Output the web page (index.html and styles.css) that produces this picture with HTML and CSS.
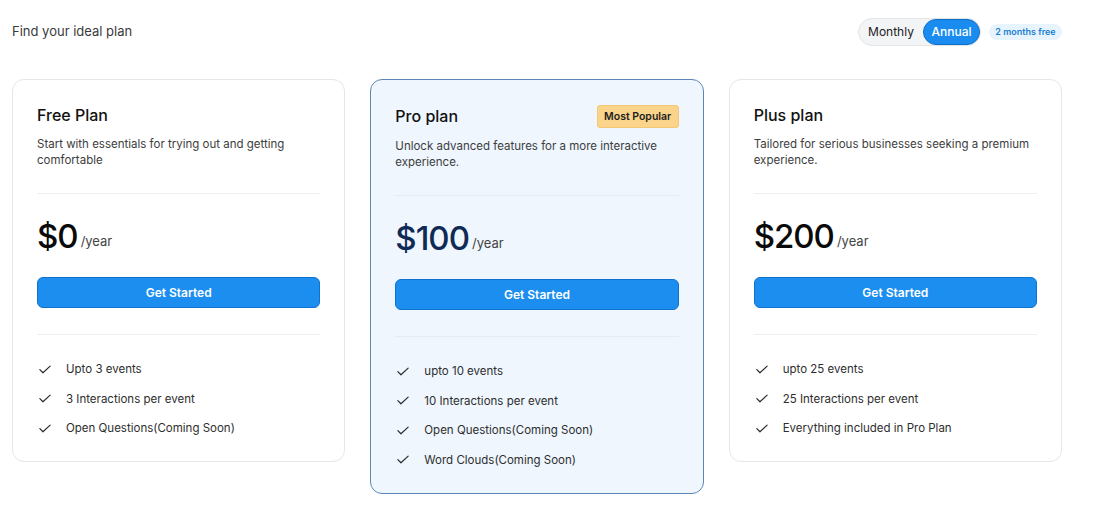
FILE: index.html
```html
<!DOCTYPE html>
<html>
<head>
<meta charset="utf-8">
<link rel="stylesheet" href="styles.css">
</head>
<body>
<div class="page">
  <header class="top">
    <div class="heading">Find your ideal plan</div>
    <div class="billing">
      <div class="toggle">
        <span class="opt">Monthly</span>
        <span class="opt active">Annual</span>
      </div>
      <span class="free-badge">2 months free</span>
    </div>
  </header>

  <div class="cards">
    <div class="card">
      <div class="card-head"><h2 class="title">Free Plan</h2></div>
      <p class="desc">Start with essentials for trying out and getting comfortable</p>
      <hr class="divider">
      <div class="price"><span class="amount">$0</span><span class="per">/year</span></div>
      <button class="cta">Get Started</button>
      <hr class="divider">
      <ul class="features">
        <li><svg class="check" viewBox="0 0 14 10"><path d="M1 5.2 L4.6 8.8 L13 1"/></svg>Upto 3 events</li>
        <li><svg class="check" viewBox="0 0 14 10"><path d="M1 5.2 L4.6 8.8 L13 1"/></svg>3 Interactions per event</li>
        <li><svg class="check" viewBox="0 0 14 10"><path d="M1 5.2 L4.6 8.8 L13 1"/></svg>Open Questions(Coming Soon)</li>
      </ul>
    </div>

    <div class="card pro">
      <div class="card-head"><h2 class="title">Pro plan</h2><span class="popular">Most Popular</span></div>
      <p class="desc">Unlock advanced features for a more interactive experience.</p>
      <hr class="divider">
      <div class="price"><span class="amount">$100</span><span class="per">/year</span></div>
      <button class="cta">Get Started</button>
      <hr class="divider">
      <ul class="features">
        <li><svg class="check" viewBox="0 0 14 10"><path d="M1 5.2 L4.6 8.8 L13 1"/></svg>upto 10 events</li>
        <li><svg class="check" viewBox="0 0 14 10"><path d="M1 5.2 L4.6 8.8 L13 1"/></svg>10 Interactions per event</li>
        <li><svg class="check" viewBox="0 0 14 10"><path d="M1 5.2 L4.6 8.8 L13 1"/></svg>Open Questions(Coming Soon)</li>
        <li><svg class="check" viewBox="0 0 14 10"><path d="M1 5.2 L4.6 8.8 L13 1"/></svg>Word Clouds(Coming Soon)</li>
      </ul>
    </div>

    <div class="card">
      <div class="card-head"><h2 class="title">Plus plan</h2></div>
      <p class="desc">Tailored for serious businesses seeking a premium experience.</p>
      <hr class="divider">
      <div class="price"><span class="amount">$200</span><span class="per">/year</span></div>
      <button class="cta">Get Started</button>
      <hr class="divider">
      <ul class="features">
        <li><svg class="check" viewBox="0 0 14 10"><path d="M1 5.2 L4.6 8.8 L13 1"/></svg>upto 25 events</li>
        <li><svg class="check" viewBox="0 0 14 10"><path d="M1 5.2 L4.6 8.8 L13 1"/></svg>25 Interactions per event</li>
        <li><svg class="check" viewBox="0 0 14 10"><path d="M1 5.2 L4.6 8.8 L13 1"/></svg>Everything included in Pro Plan</li>
      </ul>
    </div>
  </div>
</div>
</body>
</html>
```

FILE: styles.css
```css
* { box-sizing: border-box; }
html, body { margin: 0; padding: 0; background: #fff; }
body {
  font-family: Inter, "Noto Sans", "Liberation Sans", sans-serif;
  color: #222;
}
.page {
  width: 1050px;
  margin-left: 12px;
  padding-top: 18px;
}
.top {
  display: flex;
  align-items: center;
  justify-content: space-between;
  height: 28px;
}
.heading {
  font-size: 13px;
  color: #3a3a3a;
  margin-top: -2px;
}
.billing {
  display: flex;
  align-items: center;
  gap: 8px;
}
.toggle {
  display: flex;
  align-items: center;
  width: 123px;
  height: 28px;
  background: #f3f4f6;
  border: 1px solid #e3e5e8;
  border-radius: 14px;
}
.opt {
  font-size: 12px;
  color: #222;
  line-height: 26px;
}
.opt:first-child {
  width: 64px;
  text-align: center;
}
.opt.active {
  width: 57px;
  height: 26px;
  text-align: center;
  color: #fff;
  font-weight: 500;
  background: #1a8cf0;
  border: 1px solid #0d6fc9;
  border-radius: 13px;
  line-height: 24px;
}
.free-badge {
  width: 73px;
  text-align: center;
  font-size: 9px;
  font-weight: 600;
  color: #1a7fd0;
  background: #e8f4fd;
  border-radius: 8px;
  height: 16px;
  line-height: 16px;
}
.cards {
  display: grid;
  grid-template-columns: repeat(3, 1fr);
  gap: 25px;
  align-items: start;
  margin-top: 33px;
}
.card {
  border: 1px solid #e4e6e9;
  border-radius: 12px;
  padding: 25px 24px 24px;
  background: #fff;
}
.card.pro {
  background: #eff6fe;
  border-color: #5b86b6;
}
.card-head {
  display: flex;
  align-items: center;
  justify-content: space-between;
  min-height: 21px;
}
.title {
  margin: 0;
  font-size: 16px;
  font-weight: 500;
  line-height: 21px;
  color: #111;
}
.popular {
  width: 82px;
  text-align: center;
  font-size: 10.5px;
  font-weight: 600;
  color: #1d1d1d;
  background: #fad48a;
  border: 1px solid #f3c775;
  border-radius: 3px;
  height: 23px;
  line-height: 21px;
}
.desc {
  margin: 10px 0 0;
  font-size: 11.5px;
  line-height: 16px;
  color: #3d3d3d;
}
.divider {
  border: 0;
  border-top: 1px solid #eeeff1;
  margin: 25px 0 0;
}
.pro .divider { border-top-color: #e3ebf4; }
.price {
  margin-top: 22px;
  display: flex;
  align-items: baseline;
  height: 40px;
}
.amount {
  font-size: 33px;
  line-height: 40px;
  color: #0a0a0a;
  font-weight: 500;
  letter-spacing: -1px;
}
.pro .amount { color: #102a56; }
.per {
  font-size: 13px;
  color: #444;
  margin-left: 3px;
  position: relative;
  top: -2px;
}
.cta {
  display: block;
  width: 100%;
  height: 31px;
  margin-top: 21px;
  background: #1b8ef0;
  border: 1px solid #0f72cc;
  border-radius: 6px;
  color: #fff;
  font-family: inherit;
  font-size: 12px;
  font-weight: 600;
  cursor: pointer;
}
.cta + .divider { margin-top: 26px; }
.features {
  list-style: none;
  margin: 25px 0 0;
  padding: 0;
  display: flex;
  flex-direction: column;
  gap: 11.5px;
}
.features li {
  display: flex;
  align-items: center;
  height: 18px;
  font-size: 11.5px;
  color: #2e2e2e;
}
.check {
  width: 12px;
  height: 9px;
  margin-left: 2px;
  margin-right: 15px;
  fill: none;
  stroke: #2a2a2a;
  stroke-width: 1.4;
  stroke-linecap: round;
  stroke-linejoin: round;
}
```
